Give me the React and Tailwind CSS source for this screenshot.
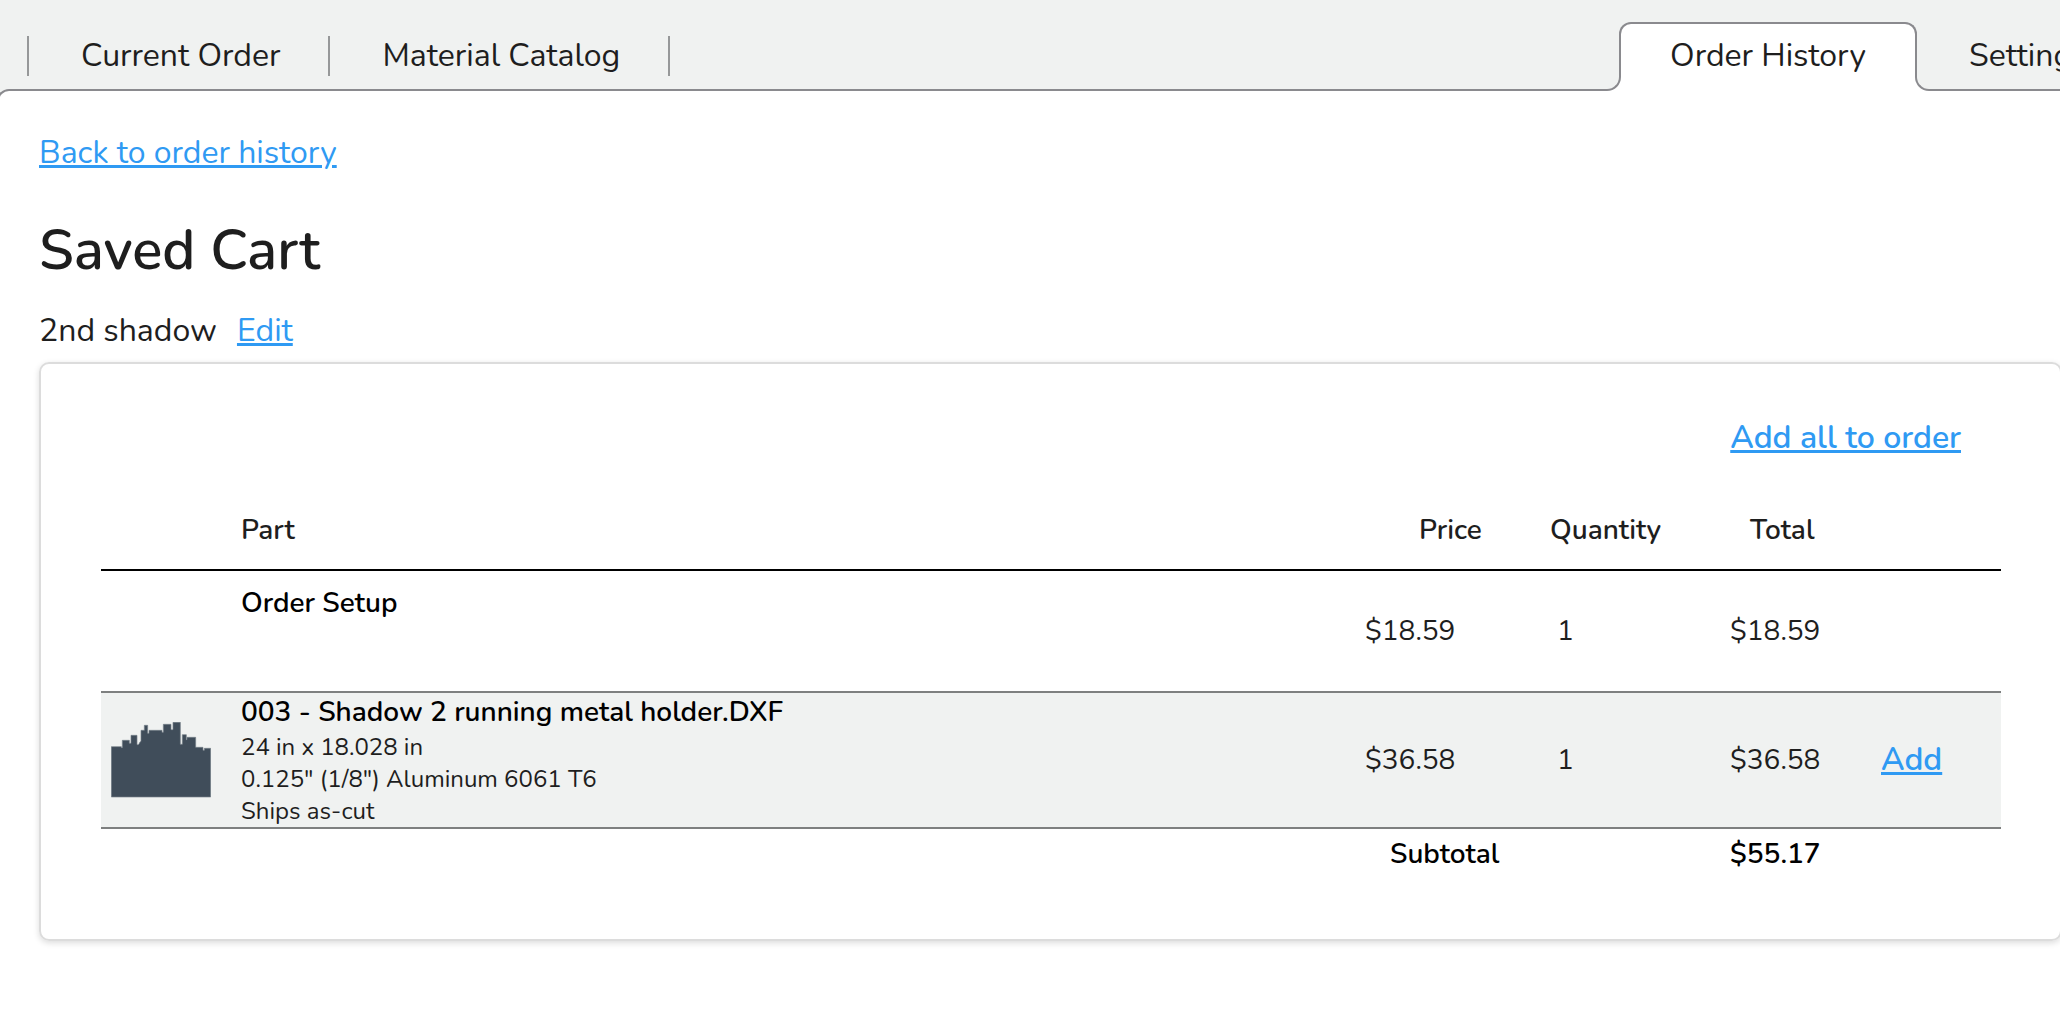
import React from "react";

const linkClass =
  "text-[32px] leading-10 text-[#2f9af3] underline decoration-[3px] underline-offset-2";

function Tab({ children }) {
  return (
    <a
      href="#"
      className="h-10 border-l-2 border-[#969899] pr-12 pl-[52px] text-[32px] leading-10 whitespace-nowrap last:border-r-2"
    >
      {children}
    </a>
  );
}

function ActiveTab({ children }) {
  return (
    <a
      href="#"
      aria-current="page"
      className="relative -mb-[2px] rounded-t-xl border-x-2 border-t-2 border-[#8a8a8e] bg-white px-[49px] pt-3 pb-[15px] text-[32px] leading-10 whitespace-nowrap"
    >
      <span className="absolute right-full bottom-0 size-3.5 bg-white">
        <span className="block size-full rounded-br-[14px] border-r-2 border-b-2 border-[#8a8a8e] bg-[#f0f2f1]" />
      </span>
      <span className="absolute bottom-0 left-full size-3.5 bg-white">
        <span className="block size-full rounded-bl-[14px] border-b-2 border-l-2 border-[#8a8a8e] bg-[#f0f2f1]" />
      </span>
      {children}
    </a>
  );
}

function PartShape() {
  return (
    <svg
      viewBox="33 36 300 226"
      className="ml-2.5 block w-[100px]"
      role="img"
      aria-label="Part preview"
    >
      <path
        d="M34 110H64V113H67V91H88V100H93V76H111V104H115L118 100L120 96L123 94V61H133V46H143V70H147V61H186V67H190V43H213V59H219V37H241V103H247V74H259V89H261V82H287V112H309V121H313V115H332V261H34Z"
        fill="#404d5a"
        stroke="#75808a"
        strokeWidth="2"
      />
    </svg>
  );
}

export default function App() {
  return (
    <div className="flex min-h-screen flex-col overflow-x-hidden bg-[#f0f2f1] font-[Nunito,sans-serif] text-[#1e1e1e]">
      <nav className="flex pt-[22px]">
        <div className="ml-[27px] flex flex-1 pt-3.5">
          <div className="flex">
            <Tab>Current Order</Tab>
            <Tab>Material Catalog</Tab>
          </div>
        </div>
        <div className="z-10 flex">
          <ActiveTab>Order History</ActiveTab>
        </div>
        <a
          href="#"
          className="mt-3.5 w-[143px] overflow-hidden pl-[52px] text-[32px] leading-10 whitespace-nowrap"
        >
          Settings
        </a>
      </nav>

      <main className="-ml-[3px] flex-1 rounded-tl-xl border-t-2 border-l-2 border-[#8a8a8e] bg-white pt-[42px] pb-16 pl-10">
        <a href="#" className={linkClass}>
          Back to order history
        </a>
        <h1 className="mt-[42px] text-[56px] leading-[72px] font-semibold">Saved Cart</h1>
        <div className="mt-6 flex gap-5 text-[32px] leading-10">
          <span>2nd shadow</span>
          <button type="button" className={linkClass}>
            Edit
          </button>
        </div>

        <section className="mt-[11px] -mr-0.5 rounded-[10px] border-2 border-[#dcdcdc] pt-[54px] pr-[59px] pb-[65px] pl-[60px] shadow-[0_2px_6px_rgba(0,0,0,0.14)]">
          <div className="flex justify-end pr-10">
            <button type="button" className={linkClass + " font-semibold"}>
              Add all to order
            </button>
          </div>

          <table className="mt-[52px] w-full table-fixed border-separate border-spacing-0 text-left text-[28px] leading-10">
            <colgroup>
              <col className="w-[140px]" />
              <col />
              <col className="w-[185px]" />
              <col className="w-[180px]" />
              <col className="w-[151px]" />
              <col className="w-[120px]" />
            </colgroup>
            <thead>
              <tr className="*:border-b-2 *:border-black *:pb-[19px] *:font-semibold">
                <td />
                <th scope="col">Part</th>
                <th scope="col" className="pl-[54px]">Price</th>
                <th scope="col">Quantity</th>
                <th scope="col" className="pl-5">Total</th>
                <td />
              </tr>
            </thead>
            <tbody>
              <tr className="h-[122px] *:border-b-2 *:border-[#7e8080]">
                <td />
                <td className="pt-3 align-top font-semibold text-black">Order Setup</td>
                <td>$18.59</td>
                <td className="pl-[7px]">1</td>
                <td>$18.59</td>
                <td />
              </tr>
              <tr className="bg-[#f0f2f1] *:border-b-2 *:border-[#7e8080]">
                <td>
                  <PartShape />
                </td>
                <td>
                  <div className="leading-[38px] font-semibold text-black">
                    003 - Shadow 2 running metal holder.DXF
                  </div>
                  <div className="text-2xl leading-8">24 in x 18.028 in</div>
                  <div className="text-2xl leading-8">0.125" (1/8") Aluminum 6061 T6</div>
                  <div className="text-2xl leading-8">Ships as-cut</div>
                </td>
                <td>$36.58</td>
                <td className="pl-[7px]">1</td>
                <td>$36.58</td>
                <td>
                  <button type="button" className={linkClass + " font-semibold"}>
                    Add
                  </button>
                </td>
              </tr>
            </tbody>
            <tfoot>
              <tr className="font-semibold text-black *:pt-[5px]">
                <td />
                <td />
                <td className="pl-[25px]">Subtotal</td>
                <td />
                <td>$55.17</td>
                <td />
              </tr>
            </tfoot>
          </table>
        </section>
      </main>
    </div>
  );
}
